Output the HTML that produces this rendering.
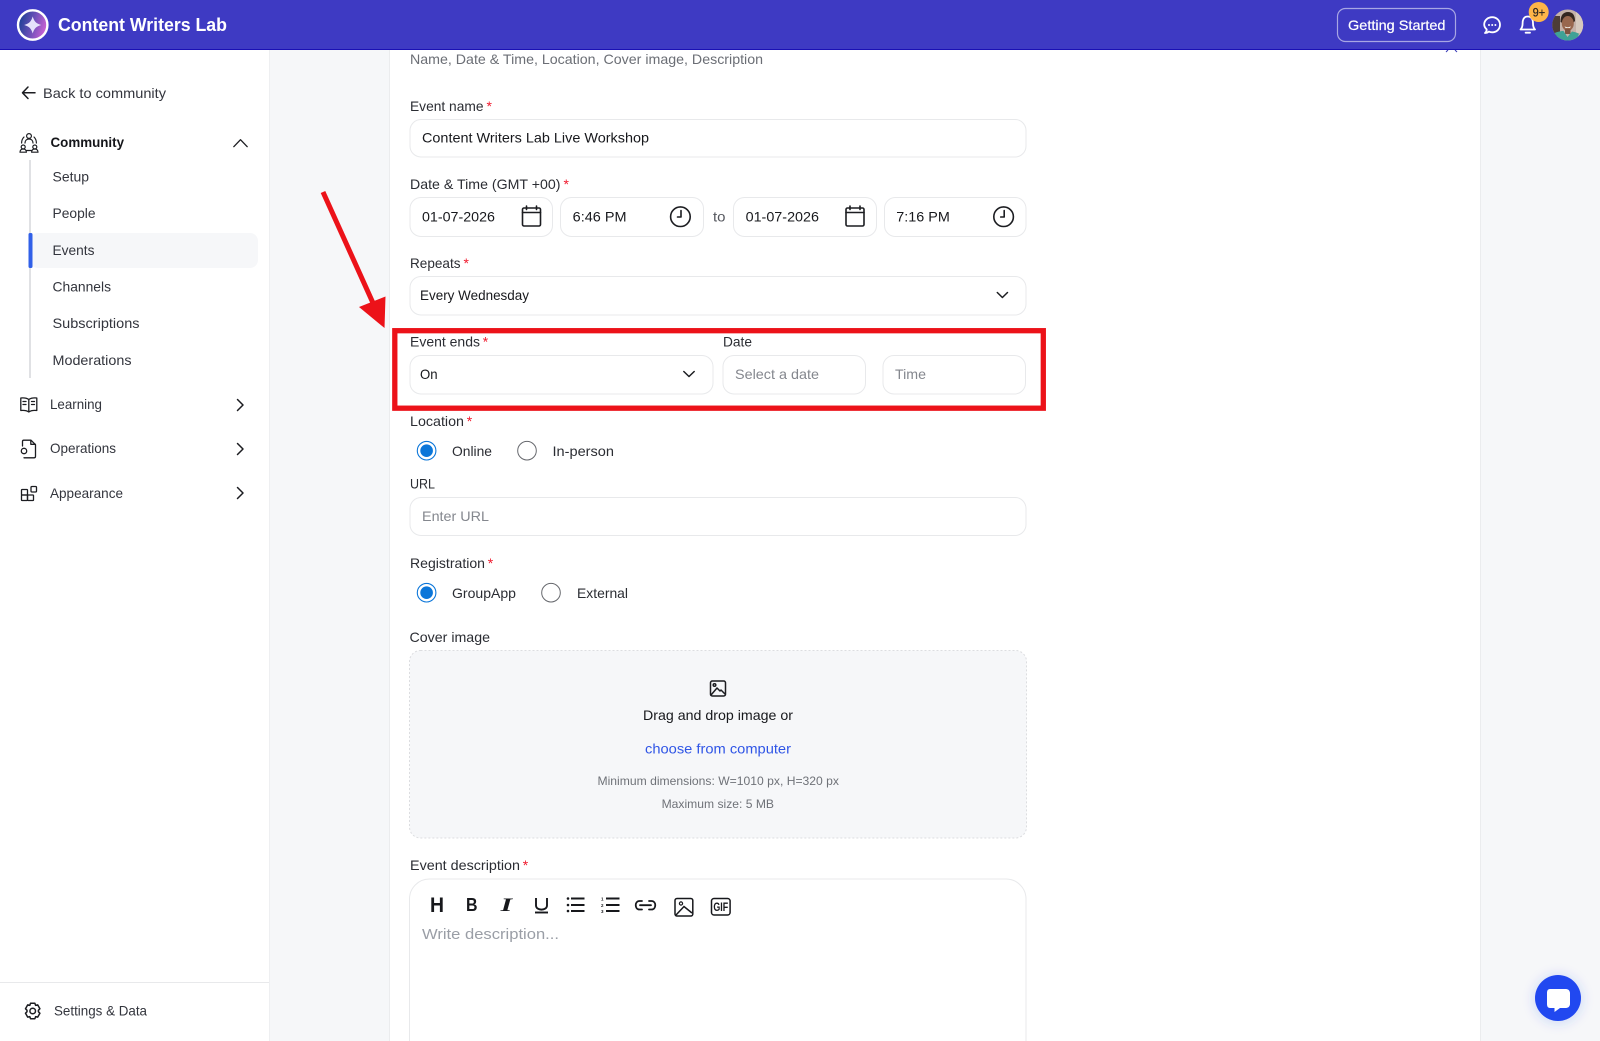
<!DOCTYPE html>
<html lang="en">
<head>
<meta charset="utf-8">
<title>Content Writers Lab</title>
<style>
html,body{margin:0;padding:0;width:1600px;height:1041px;overflow:hidden;background:#fff}
svg{display:block;position:absolute;left:0;top:0}
text{font-family:"Liberation Sans",Arial,sans-serif;font-size:14px;fill:#2d2f36}
.n{fill:#33353d}
.l{fill:#2b2d33}
.v{fill:#17181c}
.p{fill:#84878e}
.s{fill:#f0182c;font-size:14px}
.i{fill:none;stroke:#1c1d21;stroke-width:1.5;stroke-linecap:round;stroke-linejoin:round}
.f{fill:#fff;stroke:#e8e9eb;stroke-width:1}
</style>
</head>
<body>
<svg width="1600" height="1041" viewBox="0 0 1600 1041" xmlns="http://www.w3.org/2000/svg">
<defs>
<linearGradient id="lg" x1="0" y1="0.3" x2="1" y2="0.6"><stop offset="0" stop-color="#173f94"/><stop offset="0.5" stop-color="#6a4fb8"/><stop offset="1" stop-color="#d263d6"/></linearGradient>
<clipPath id="av"><circle cx="1567.7" cy="25" r="15.5"/></clipPath>
<filter id="sh" x="-30%" y="-30%" width="160%" height="160%"><feGaussianBlur stdDeviation="5"/></filter>
</defs>

<!-- backgrounds -->
<rect x="269" y="49" width="1331" height="992" fill="#f6f7f9"/>
<rect x="389.5" y="40" width="1091" height="1010" fill="#fff" stroke="#ebecee"/>
<rect x="0" y="49" width="269" height="992" fill="#fff"/>
<rect x="269" y="49" width="1" height="992" fill="#eeeff1"/>

<!-- small peek chevron -->
<path d="M1446 52l2-2M1457 52l-2-2" stroke="#3a3cb8" stroke-width="1" fill="none"/>

<!-- header -->
<rect x="0" y="0" width="1600" height="49" fill="#3e3ac3"/>
<rect x="0" y="49" width="1600" height="1" fill="#1a10b4"/>
<circle cx="32.7" cy="25" r="14.700" fill="url(#lg)" stroke="#fff" stroke-width="2.400"/>
<path d="M32.7 16.500C34.200 21.600 36.200 23.500 41.200 25C36.200 26.500 34.200 28.400 32.7 33.500C31.200 28.400 29.200 26.500 24.200 25C29.200 23.500 31.200 21.600 32.7 16.500Z" fill="#e6e2fb"/>
<text x="58" y="31" textLength="169" lengthAdjust="spacingAndGlyphs" style="font-size:18px;font-weight:700;fill:#fff">Content Writers Lab</text>
<rect x="1337.5" y="8.5" width="118" height="33" rx="8" fill="none" stroke="#fff" stroke-opacity=".55" stroke-width="1.200"/>
<text x="1348" y="30" textLength="97.5" lengthAdjust="spacingAndGlyphs" style="fill:#fff;font-size:14px;stroke:#fff;stroke-width:.2">Getting Started</text>
<!-- chat -->
<path d="M1485 33C1486.400 31.700 1486.800 30.400 1486.700 29.400C1485.100 27.900 1484.200 26.300 1484.200 24.600C1484.200 20.300 1487.800 17.200 1492.200 17.200C1496.600 17.200 1500 20.500 1500 24.800C1500 29.100 1496.600 32.300 1492.200 32.300C1491 32.300 1489.900 32.100 1488.900 31.600C1487.900 32.500 1486.500 33.100 1485 33Z" fill="none" stroke="#fff" stroke-width="1.800" stroke-linejoin="round"/>
<circle cx="1489" cy="25" r="1" fill="#fff"/><circle cx="1492.2" cy="25" r="1" fill="#fff"/><circle cx="1495.4" cy="25" r="1" fill="#fff"/>
<!-- bell -->
<path d="M1520.5 29.5C1522 28 1522.6 26.5 1522.6 23.5C1522.6 19 1524.3 16.5 1527.8 16.5C1531.3 16.5 1533 19 1533 23.5C1533 26.5 1533.6 28 1535 29.5Z" fill="none" stroke="#fff" stroke-width="1.800" stroke-linejoin="round"/>
<path d="M1525.6 32.7H1530" stroke="#fff" stroke-width="1.800" stroke-linecap="round"/>
<circle cx="1538.7" cy="12" r="10" fill="#ffb548"/>
<text x="1532.600" y="16.300" textLength="12.500" lengthAdjust="spacingAndGlyphs" style="font-size:12px;fill:#2b2520;stroke:#2b2520;stroke-width:.2">9+</text>
<!-- avatar -->
<g clip-path="url(#av)">
<rect x="1552" y="9" width="32" height="32" fill="#c4b1a8"/>
<rect x="1552" y="16" width="8" height="20" fill="#4d3d38"/>
<rect x="1576" y="9" width="8" height="24" fill="#d6c9be"/>
<path d="M1560.500 22C1560.500 15 1563.500 12 1568 12C1572.500 12 1575 15 1575 21L1573 23H1562.500Z" fill="#33261f"/>
<ellipse cx="1567.800" cy="23.500" rx="6" ry="7.500" fill="#98674e"/>
<path d="M1564.500 26.300C1566 27.500 1569.500 27.500 1571 26.300L1570 28H1565.500Z" fill="#f1ece6"/>
<rect x="1565" y="29" width="5.500" height="5" fill="#7f5440"/>
<path d="M1552 41V34.500C1556 32 1560 31 1563.500 31L1567.500 37L1572 31.500C1575.500 32 1578 33 1580 34.500L1584 41Z" fill="#3fa296"/>
<path d="M1577 41L1579 33.500L1584 33V41Z" fill="#cdbfae"/>
</g>

<!-- sidebar -->
<path class="i" d="M35 92.8H22.5M28 87L22.5 92.8L28 98.5"/>
<text class="n" x="43" y="97.8" textLength="123" lengthAdjust="spacingAndGlyphs">Back to community</text>

<g class="i" style="stroke-width:1.2">
<circle cx="29" cy="136" r="2.4"/>
<path d="M25 143c0-2.6 1.8-4 4-4s4 1.4 4 4"/>
<circle cx="23.2" cy="147" r="2"/><path d="M20 152.2c0-2 1.4-3.2 3.2-3.2s3.2 1.200 3.200 3.200z"/>
<circle cx="34.800" cy="147" r="2"/><path d="M31.600 152.200c0-2 1.400-3.200 3.200-3.200s3.200 1.200 3.200 3.200z"/>
<path d="M24 137c-1.600 1.600-2.400 3.600-2.400 6M34 137c1.600 1.600 2.400 3.600 2.400 6M26.500 150.500h5"/>
</g>
<text x="50.500" y="147" textLength="73.500" lengthAdjust="spacingAndGlyphs" style="font-weight:700;fill:#15161a">Community</text>
<path class="i" style="stroke-width:1.300" d="M233.800 146.700L240.500 139.700L247.200 146.700"/>

<rect x="29" y="160" width="2" height="218" fill="#e0e1e4"/>
<rect x="30" y="233" width="228" height="35" rx="8" fill="#f6f7f9"/>
<rect x="28.500" y="233" width="4" height="35" rx="1.500" fill="#3160e8"/>
<text class="n" x="52.500" y="181.700" textLength="36.500" lengthAdjust="spacingAndGlyphs">Setup</text>
<text class="n" x="52.500" y="218" textLength="43" lengthAdjust="spacingAndGlyphs">People</text>
<text class="n" x="52.500" y="255" textLength="42" lengthAdjust="spacingAndGlyphs">Events</text>
<text class="n" x="52.500" y="291.700" textLength="58.500" lengthAdjust="spacingAndGlyphs">Channels</text>
<text class="n" x="52.500" y="328" textLength="87" lengthAdjust="spacingAndGlyphs">Subscriptions</text>
<text class="n" x="52.500" y="365" textLength="79" lengthAdjust="spacingAndGlyphs">Moderations</text>

<g class="i" style="stroke-width:1.300">
<path d="M28.800 399.500C27 398.200 24 397.700 20.800 398V410.500C24 410.200 27 410.700 28.800 412C30.600 410.700 33.600 410.200 36.800 410.500V398C33.600 397.700 30.600 398.200 28.800 399.500ZM28.800 399.500V412"/>
<path d="M23 401.500h3M23 404.500h3M31.500 401.500h3M31.500 404.500h3"/>
</g>
<text class="n" x="50" y="409" textLength="52" lengthAdjust="spacingAndGlyphs">Learning</text>
<path class="i" d="M237.500 399.500L243 405L237.500 410.500"/>

<g class="i" style="stroke-width:1.300">
<path d="M22.500 446v-4.500c0-.800.600-1.300 1.300-1.300H31l4.500 4.500v11.500c0 1-.700 1.600-1.600 1.600H24"/>
<path d="M30.800 440.500v3.800h4.500"/>
<circle cx="24" cy="451" r="2.700"/>
</g>
<text class="n" x="50" y="453" textLength="66" lengthAdjust="spacingAndGlyphs">Operations</text>
<path class="i" d="M237.500 443.500L243 449L237.500 454.500"/>

<g class="i" style="stroke-width:1.300;stroke-linecap:square">
<rect x="21.500" y="489.500" width="6" height="5.500" rx=".6"/>
<rect x="21.500" y="495" width="6" height="5.500" rx=".6"/>
<rect x="27.500" y="495" width="6" height="5.500" rx=".6"/>
<rect x="31" y="486.500" width="5.500" height="5.500" rx="1"/>
</g>
<text class="n" x="50" y="497.800" textLength="73" lengthAdjust="spacingAndGlyphs">Appearance</text>
<path class="i" d="M237.500 487.500L243 493L237.500 498.500"/>

<rect x="0" y="982" width="269" height="1" fill="#e8e9eb"/>
<g class="i" style="stroke-width:1.500">
<circle cx="32.700" cy="1011" r="2.800"/>
<path d="M30.500 1003.300h4.400l.7 2.100 2.100-.5 2.200 3.800-1.500 1.600 0 1.400 1.500 1.600-2.200 3.800-2.100-.5-.7 2.100h-4.400l-.7-2.100-2.100.5-2.200-3.800 1.500-1.600 0-1.400-1.500-1.600 2.200-3.800 2.100.5z"/>
</g>
<text class="n" x="54" y="1015.700" textLength="93" lengthAdjust="spacingAndGlyphs">Settings &amp; Data</text>

<!-- form -->
<text x="410" y="64" textLength="353" lengthAdjust="spacingAndGlyphs" style="fill:#6b6e75">Name, Date &amp; Time, Location, Cover image, Description</text>

<text class="l" x="410" y="111" textLength="73.500" lengthAdjust="spacingAndGlyphs">Event name</text><text class="s" x="486.500" y="111">*</text>
<rect class="f" x="410" y="119.500" width="616" height="37.500" rx="11"/>
<text class="v" x="422" y="142.700" textLength="227" lengthAdjust="spacingAndGlyphs">Content Writers Lab Live Workshop</text>

<text class="l" x="410" y="189" textLength="150.500" lengthAdjust="spacingAndGlyphs">Date &amp; Time (GMT +00)</text><text class="s" x="563.500" y="189">*</text>
<rect class="f" x="410" y="197.500" width="142.500" height="39" rx="11"/>
<rect class="f" x="560.500" y="197.500" width="143" height="39" rx="11"/>
<rect class="f" x="733.500" y="197.500" width="143" height="39" rx="11"/>
<rect class="f" x="884.500" y="197.500" width="141.500" height="39" rx="11"/>
<text class="v" x="422" y="221.700" textLength="73" lengthAdjust="spacingAndGlyphs">01-07-2026</text>
<g class="i" style="stroke-width:1.600"><rect x="522.500" y="208" width="18" height="18" rx="1.500"/><path d="M522.500 212.500h18M526.500 206v3.500M536.500 206v3.500"/></g>
<text class="v" x="572.700" y="221.700" textLength="53.800" lengthAdjust="spacingAndGlyphs">6:46 PM</text>
<g class="i" style="stroke-width:1.600"><circle cx="680.400" cy="216.700" r="9.800"/><path d="M681 210.500v6.500h-3.500"/></g>
<text x="713" y="221.700" textLength="12.500" lengthAdjust="spacingAndGlyphs" style="fill:#55575e">to</text>
<text class="v" x="745.600" y="221.700" textLength="73.400" lengthAdjust="spacingAndGlyphs">01-07-2026</text>
<g class="i" style="stroke-width:1.600"><rect x="846" y="208" width="18" height="18" rx="1.500"/><path d="M846 212.500h18M850 206v3.500M860 206v3.500"/></g>
<text class="v" x="896.300" y="221.700" textLength="53.500" lengthAdjust="spacingAndGlyphs">7:16 PM</text>
<g class="i" style="stroke-width:1.600"><circle cx="1003.600" cy="216.700" r="9.800"/><path d="M1004.200 210.500v6.500h-3.500"/></g>

<text class="l" x="410" y="268" textLength="50.500" lengthAdjust="spacingAndGlyphs">Repeats</text><text class="s" x="463.500" y="268">*</text>
<rect class="f" x="410" y="276.500" width="616" height="38.500" rx="11"/>
<text class="v" x="420" y="300" textLength="109" lengthAdjust="spacingAndGlyphs" style="font-size:13.500px">Every Wednesday</text>
<path class="i" d="M997.300 292.500L1002.400 297.500L1007.500 292.500"/>

<text class="l" x="410" y="346.700" textLength="70" lengthAdjust="spacingAndGlyphs">Event ends</text><text class="s" x="482.800" y="346.700">*</text>
<text class="l" x="723" y="346.700" textLength="29" lengthAdjust="spacingAndGlyphs">Date</text>
<rect class="f" x="410" y="355.500" width="303" height="38.500" rx="11"/>
<text class="v" x="420" y="379" textLength="17.600" lengthAdjust="spacingAndGlyphs">On</text>
<path class="i" d="M683.800 371.500L689 376.500L694.200 371.500"/>
<rect class="f" x="723" y="355.500" width="142.500" height="38.500" rx="11"/>
<text class="p" x="735" y="379" textLength="84" lengthAdjust="spacingAndGlyphs">Select a date</text>
<rect class="f" x="883" y="355.500" width="142.500" height="38.500" rx="11"/>
<text class="p" x="895" y="379" textLength="31" lengthAdjust="spacingAndGlyphs">Time</text>

<text class="l" x="410" y="426" textLength="54" lengthAdjust="spacingAndGlyphs">Location</text><text class="s" x="466.800" y="426">*</text>
<circle cx="426.600" cy="450.700" r="9.300" fill="#fff" stroke="#0b76d9" stroke-width="1.100"/><circle cx="426.600" cy="450.700" r="6.300" fill="#0b76d9"/>
<text class="l" x="452" y="456" textLength="40" lengthAdjust="spacingAndGlyphs">Online</text>
<circle cx="527" cy="450.700" r="9.300" fill="#fff" stroke="#66686d" stroke-width="1"/>
<text class="l" x="552.500" y="456" textLength="61.500" lengthAdjust="spacingAndGlyphs">In-person</text>

<text class="l" x="410" y="488.700" textLength="25" lengthAdjust="spacingAndGlyphs">URL</text>
<rect class="f" x="410" y="497.500" width="616" height="38" rx="11"/>
<text class="p" x="422" y="521" textLength="67" lengthAdjust="spacingAndGlyphs">Enter URL</text>

<text class="l" x="410" y="568" textLength="75" lengthAdjust="spacingAndGlyphs">Registration</text><text class="s" x="487.800" y="568">*</text>
<circle cx="426.600" cy="592.700" r="9.300" fill="#fff" stroke="#0b76d9" stroke-width="1.100"/><circle cx="426.600" cy="592.700" r="6.300" fill="#0b76d9"/>
<text class="l" x="452" y="598" textLength="64" lengthAdjust="spacingAndGlyphs">GroupApp</text>
<circle cx="551" cy="592.700" r="9.300" fill="#fff" stroke="#66686d" stroke-width="1"/>
<text class="l" x="577" y="598" textLength="51" lengthAdjust="spacingAndGlyphs">External</text>

<text class="l" x="409.500" y="642" textLength="80.500" lengthAdjust="spacingAndGlyphs">Cover image</text>
<rect x="409.500" y="650.500" width="617" height="187.500" rx="11" fill="#f6f7f9" stroke="#dcdde0" stroke-dasharray="2 2"/>
<g class="i" style="stroke-width:1.500"><rect x="710.500" y="681" width="15" height="15" rx="1.800"/><circle cx="714.500" cy="685" r="1.300"/><path d="M711 695l6-7 3 3 1-1 4 4"/></g>
<text class="v" x="643" y="720" textLength="150" lengthAdjust="spacingAndGlyphs">Drag and drop image or</text>
<text x="645" y="753.300" textLength="146" lengthAdjust="spacingAndGlyphs" style="fill:#2f55e6">choose from computer</text>
<text x="597.500" y="785" textLength="241.500" lengthAdjust="spacingAndGlyphs" style="font-size:12px;fill:#6f7278">Minimum dimensions: W=1010 px, H=320 px</text>
<text x="661.600" y="808" textLength="112.400" lengthAdjust="spacingAndGlyphs" style="font-size:12px;fill:#6f7278">Maximum size: 5 MB</text>

<text class="l" x="410" y="870" textLength="110" lengthAdjust="spacingAndGlyphs">Event description</text><text class="s" x="522.800" y="870">*</text>
<rect class="f" x="409.500" y="879" width="616.500" height="200" rx="20"/>

<!-- toolbar -->
<text x="430" y="912.200" textLength="14" lengthAdjust="spacingAndGlyphs" style="font-size:21px;font-weight:700;fill:#17181c">H</text>
<text x="466" y="910.800" textLength="11.500" lengthAdjust="spacingAndGlyphs" style="font-size:18px;font-weight:700;fill:#17181c">B</text>
<text x="500.700" y="910.800" textLength="11.600" lengthAdjust="spacingAndGlyphs" style="font-family:'Liberation Serif',serif;font-size:19px;font-weight:700;font-style:italic;fill:#17181c">I</text>
<g fill="none" stroke="#17181c" stroke-linecap="butt">
<path d="M536 898V905.500C536 911 547 911 547 905.500V898" stroke-width="1.900"/>
<path d="M535 912.500H548" stroke-width="1.900"/>
<path d="M571 898.500H584.500M571 905H584.500M571 911H584.500" stroke-width="1.900"/>
<path d="M606 898.500H619.500M606 905H619.500M606 911H619.500" stroke-width="1.900"/>
<path d="M642 901H639.500C634.500 901 634.500 909.500 639.500 909.500H642M649 901H651.500C656.500 901 656.500 909.500 651.500 909.500H649M640 905.200H651" stroke-width="1.800" stroke-linecap="round"/>
<rect x="675" y="898.500" width="17.800" height="17.500" rx="2" stroke-width="1.500"/>
<circle cx="681" cy="903.500" r="1.600" stroke-width="1.200"/>
<path d="M676 915L684 906.500L692 913" stroke-width="1.500"/>
<rect x="711.500" y="898.500" width="18.600" height="16.500" rx="2.500" stroke-width="1.500"/>
</g>
<circle cx="568" cy="898.500" r="1.300" fill="#17181c"/><circle cx="568" cy="905" r="1.300" fill="#17181c"/><circle cx="568" cy="911" r="1.300" fill="#17181c"/>
<text x="601" y="900.500" style="font-size:4.500px;font-weight:700;fill:#17181c">1</text><text x="601" y="906.800" style="font-size:4.500px;font-weight:700;fill:#17181c">2</text><text x="601" y="913" style="font-size:4.500px;font-weight:700;fill:#17181c">3</text>
<text x="713.400" y="911" textLength="14.800" lengthAdjust="spacingAndGlyphs" style="font-size:11.500px;font-weight:700;fill:#17181c">GIF</text>
<text x="422" y="939" textLength="137" lengthAdjust="spacingAndGlyphs" style="font-size:15px;fill:#9a9ea6">Write description...</text>

<!-- red annotation -->
<rect x="394.800" y="330.700" width="648.500" height="77.500" fill="none" stroke="#ec1219" stroke-width="5.300"/>
<path d="M323 192L373 303" stroke="#ec1219" stroke-width="5" fill="none"/>
<path d="M384.500 328L359 307L385.500 296.500Z" fill="#ec1219"/>

<!-- chat launcher -->
<circle cx="1558" cy="999" r="26" fill="#2148f0" fill-opacity=".12" filter="url(#sh)"/>
<circle cx="1558" cy="998" r="23" fill="#2148f0"/>
<path d="M1550 989H1566C1568.200 989 1570 990.800 1570 993V1004C1570 1006.200 1568.200 1008 1566 1008H1560L1554.500 1012V1008H1550C1547.800 1008 1547 1006.200 1547 1004V993C1547 990.800 1547.800 989 1550 989Z" fill="#fff"/>
</svg>
</body>
</html>
